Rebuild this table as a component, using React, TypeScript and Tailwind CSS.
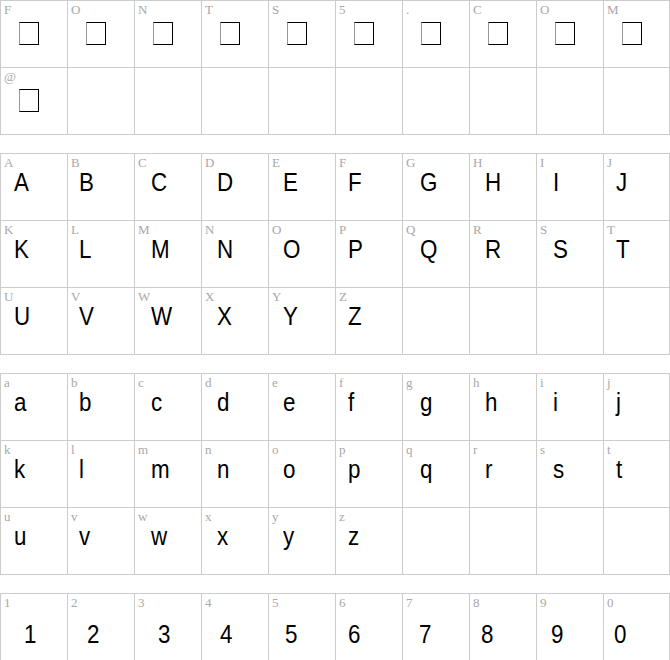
const topChars = ["F", "O", "N", "T", "S", "5", ".", "C", "O", "M", "@"];
const upper = "ABCDEFGHIJKLMNOPQRSTUVWXYZ".split("");
const lower = "abcdefghijklmnopqrstuvwxyz".split("");
const digits = "1234567890".split("");

// left offset of the glyph in each column, taken from the specimen
const letterPad = [13, 11, 16, 15, 14, 12, 17, 15, 16, 12];
const digitPad = [23, 19, 23, 18, 16, 12, 16, 11, 14, 10];

function pad(chars: string[], rows: number) {
  const cells: (string | null)[] = [...chars];
  while (cells.length < rows * 10) cells.push(null);
  return cells;
}

function Label({ ch }: { ch: string }) {
  return (
    <div className="h-[15px] pl-[3px] pt-[2px] font-['Liberation_Serif',serif] text-[13px] leading-[13px] text-[#a8a8a8]">
      {ch}
    </div>
  );
}

function Grid({
  cells,
  render,
}: {
  cells: (string | null)[];
  render: (ch: string, col: number) => React.ReactNode;
}) {
  return (
    <div className="grid w-[670px] grid-cols-[repeat(9,67px)_66px] border-l border-t border-[#cccccc]">
      {cells.map((ch, i) => (
        <div key={i} className="h-[67px] border-b border-r border-[#cccccc]">
          {ch !== null && (
            <>
              <Label ch={ch} />
              {render(ch, i % 10)}
            </>
          )}
        </div>
      ))}
    </div>
  );
}

function Glyph({ ch, left, digit }: { ch: string; left: number; digit?: boolean }) {
  return (
    <div
      className={
        "font-['Liberation_Sans',sans-serif] text-[26px] leading-[28px] text-black " +
        (digit ? "mt-[11px]" : "mt-[-1px]")
      }
      style={{ paddingLeft: left }}
    >
      <span className="inline-block origin-left scale-x-[0.86]">{ch}</span>
    </div>
  );
}

export default function App() {
  return (
    <div className="flex w-[670px] flex-col gap-[18px] bg-white">
      <Grid
        cells={pad(topChars, 2)}
        render={() => (
          <div className="ml-[18px] mt-[6px] h-[23px] w-[20px] border border-black border-l-[#999999]" />
        )}
      />
      <Grid cells={pad(upper, 3)} render={(ch, c) => <Glyph ch={ch} left={letterPad[c]} />} />
      <Grid cells={pad(lower, 3)} render={(ch, c) => <Glyph ch={ch} left={letterPad[c]} />} />
      <Grid
        cells={pad(digits, 1)}
        render={(ch, c) => <Glyph ch={ch} left={digitPad[c]} digit />}
      />
    </div>
  );
}
